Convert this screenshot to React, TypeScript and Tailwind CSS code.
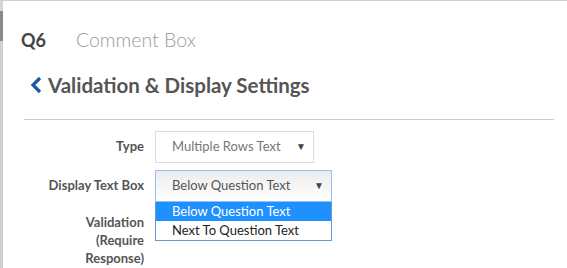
import React from 'react'

const font = { fontFamily: 'Lato, "Open Sans", sans-serif' }

function Caret() {
  return <span className="text-[10px] text-[#444]">▼</span>
}

export default function App() {
  return (
    <div className="w-[567px] h-[268px] overflow-hidden bg-white border-t border-[#cfcfcf] flex" style={font}>
      {/* left edge strip */}
      <div className="w-[3px] flex-shrink-0 flex flex-col">
        <div className="h-[10px] bg-[#d6d6d6]" />
        <div className="h-[30px] bg-[#8a8a8a]" />
        <div className="flex-1 bg-[#d0d0d0]" />
      </div>

      <div className="flex-1 pl-[18px] pr-[13px]">
        {/* question header */}
        <div className="flex items-baseline mt-[24px] h-[24px]">
          <span className="text-[18px] font-bold text-[#444]">Q6</span>
          <span className="ml-[30px] text-[19.5px] font-light text-[#9a9a9a]">Comment Box</span>
        </div>

        {/* section title */}
        <div className="flex items-center mt-[21px] ml-[8px] gap-[5px]">
          <svg width="14" height="18" viewBox="0 0 14 18">
            <path d="M11 2 L4 9 L11 16" fill="none" stroke="#1d57a5" strokeWidth="3.2" strokeLinejoin="miter" />
          </svg>
          <span className="text-[20.5px] font-bold text-[#555]">Validation &amp; Display Settings</span>
        </div>

        <div className="mt-[18px] ml-[3px] border-t border-[#cccccc]" />

        {/* form */}
        <div className="mt-[11px] flex flex-col gap-[7px] text-[13px]">
          <div className="flex items-center">
            <div className="w-[123px] text-right font-bold text-[#555]">Type</div>
            <div className="ml-[11px] w-[159px] h-[32px] border border-[#dcdcdc] bg-white flex items-center justify-between pl-[16px] pr-[7px] text-[#777]">
              <span>Multiple Rows Text</span>
              <Caret />
            </div>
          </div>

          <div className="flex items-start">
            <div className="w-[123px] h-[32px] flex items-center justify-end font-bold text-[#555]">Display Text Box</div>
            <div className="ml-[11px] flex flex-col">
              <div className="w-[177px] h-[32px] border border-[#96c0ee] bg-gradient-to-b from-[#ececec] to-white flex items-center justify-between pl-[16px] pr-[7px] text-[#555]">
                <span>Below Question Text</span>
                <Caret />
              </div>
              <div className="w-[177px] border border-[#6b97d3] border-t-0 bg-white">
                <div className="h-[19px] bg-[#1e90ff] text-white pl-[16px] flex items-center">Below Question Text</div>
                <div className="h-[19px] text-[#222] pl-[16px] flex items-center">Next To Question Text</div>
              </div>
            </div>
          </div>
        </div>

        <div className="-mt-[28px] w-[123px] text-right font-bold text-[#555] text-[13px] leading-[18px]">
          Validation<br />(Require<br />Response)
        </div>
      </div>
    </div>
  )
}
